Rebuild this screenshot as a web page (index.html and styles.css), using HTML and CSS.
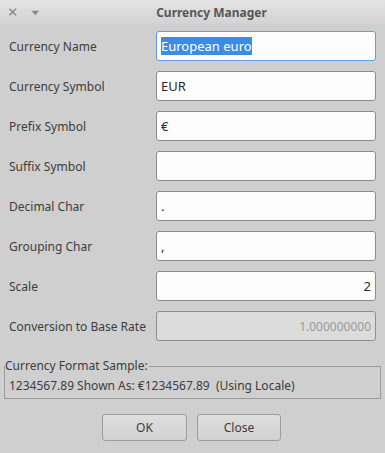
FILE: index.html
```html
<!DOCTYPE html>
<html>
<head>
<meta charset="utf-8">
<link rel="stylesheet" href="styles.css">
</head>
<body>
<div class="window">
  <div class="titlebar">
    <div class="tb-icons">
      <svg width="10" height="10" viewBox="0 0 10 10" class="ico-x"><path d="M1.5 1.5 L8.5 8.5 M8.5 1.5 L1.5 8.5" stroke="#8a8a8a" stroke-width="1.6" fill="none"/></svg>
      <svg width="9" height="6" viewBox="0 0 9 6" class="ico-down"><path d="M0.5 0.5 H8.5 L4.5 5.5 Z" fill="#8a8a8a"/></svg>
    </div>
    <div class="title">Currency Manager</div>
  </div>
  <div class="content">
    <div class="form">
      <div class="label">Currency Name</div>
      <div class="field focus"><span class="sel">European euro</span></div>
      <div class="label">Currency Symbol</div>
      <div class="field">EUR</div>
      <div class="label">Prefix Symbol</div>
      <div class="field">€</div>
      <div class="label">Suffix Symbol</div>
      <div class="field"></div>
      <div class="label">Decimal Char</div>
      <div class="field">.</div>
      <div class="label">Grouping Char</div>
      <div class="field">,</div>
      <div class="label">Scale</div>
      <div class="field right">2</div>
      <div class="label">Conversion to Base Rate</div>
      <div class="field right disabled">1.000000000</div>
    </div>
    <fieldset class="group">
      <legend>Currency Format Sample:</legend>
      <div class="sample">1234567.89 Shown As: €1234567.89&nbsp; (Using Locale)</div>
    </fieldset>
    <div class="buttons">
      <div class="btn btn-ok">OK</div>
      <div class="btn btn-close">Close</div>
    </div>
  </div>
</div>
</body>
</html>
```
FILE: styles.css
```css
* { box-sizing: border-box; }
html, body { margin: 0; padding: 0; }
body {
  width: 385px;
  height: 453px;
  background: #cfcfcf;
  font-family: "Noto Sans", "Open Sans", sans-serif;
  font-size: 12px;
  color: #3b3b3b;
  overflow: hidden;
}
.window { width: 385px; height: 453px; display: flex; flex-direction: column; }
.titlebar {
  height: 24px;
  flex: none;
  display: flex;
  align-items: center;
  background: linear-gradient(#e3e3e3, #d3d3d3);
}
.tb-icons {
  display: flex;
  align-items: center;
  gap: 14px;
  padding-left: 8px;
  width: 40px;
  flex: none;
}
.ico-down { margin-top: 1px; }
.title {
  flex: 1;
  text-align: center;
  font-weight: bold;
  font-size: 12px;
  color: #575757;
  padding-right: 2px;
}
.content { padding: 7px 9px 0 9px; }
.form {
  display: grid;
  grid-template-columns: 147px 220px;
  grid-auto-rows: 30px;
  row-gap: 10px;
}
.label { display: flex; align-items: center; color: #3d3d3d; }
.field {
  background: #fdfdfd;
  border: 1px solid #8c8c8c;
  border-radius: 3px;
  display: flex;
  align-items: center;
  padding: 0 4px;
  color: #2a2a2a;
  font-size: 13px;
}
.field.focus { border-color: #5e9ee0; }
.field.right { justify-content: flex-end; }
.field.disabled { background: #dcdcdc; color: #9a9a9a; font-size: 12px; border-color: #8f8f8f; }
.sel { background: #3c8ce6; color: #fff; line-height: 18px; }
.group {
  margin: 17px 0 0 -5px;
  width: 377px;
  border: 1px solid #9a9a9a;
  padding: 0;
  height: 41px;
}
.group legend {
  padding: 0 1px 0 0;
  color: #3d3d3d;
  line-height: 16px;
}
.sample { padding: 3px 0 0 4px; color: #3d3d3d; }
.buttons {
  display: flex;
  justify-content: center;
  gap: 10px;
  margin-top: 15px;
  padding-right: 2px;
}
.btn {
  height: 27px;
  border: 1px solid #9c9c9c;
  border-radius: 3px;
  background: linear-gradient(#dedede, #d2d2d2);
  display: flex;
  align-items: center;
  justify-content: center;
  color: #3d3d3d;
  font-size: 12px;
}
.btn-ok { width: 85px; }
.btn-close { width: 84px; }
```
